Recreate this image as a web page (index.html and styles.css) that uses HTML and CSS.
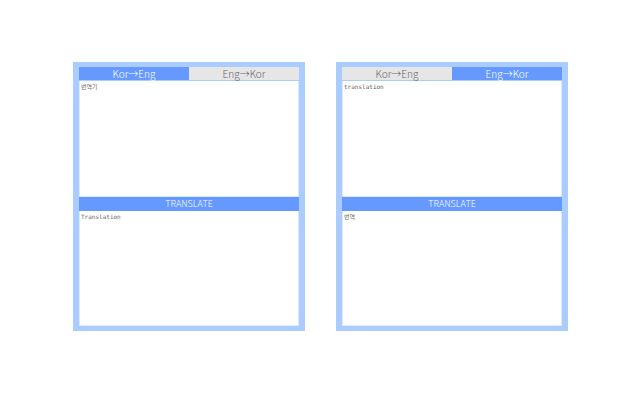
FILE: index.html
```html
<!DOCTYPE html>
<html lang="ko">
<head>
  <meta charset="UTF-8">
  <title>번역기</title>
  <link rel="stylesheet" href="styles.css">
</head>
<body>
  <div class="wrap">
    <div class="panel">
      <div class="tabs">
        <div class="tab active">Kor→Eng</div>
        <div class="tab">Eng→Kor</div>
      </div>
      <textarea class="box" placeholder="번역기"></textarea>
      <button class="go">TRANSLATE</button>
      <textarea class="box last" placeholder="Translation"></textarea>
    </div>

    <div class="panel">
      <div class="tabs">
        <div class="tab">Kor→Eng</div>
        <div class="tab active">Eng→Kor</div>
      </div>
      <textarea class="box" placeholder="translation"></textarea>
      <button class="go">TRANSLATE</button>
      <textarea class="box last" placeholder="번역"></textarea>
    </div>
  </div>
</body>
</html>
```

FILE: styles.css
```css
body {
  margin: 0;
  background: #ffffff;
  font-family: "Noto Sans CJK KR", "DejaVu Sans", sans-serif;
}

.wrap {
  display: flex;
  justify-content: center;
  gap: 31px;
  padding-top: 62px;
  padding-left: 1px;
}

.panel {
  width: 220px;
  border: 6px solid #aaccff;
  border-top-width: 5px;
  border-bottom-width: 5px;
  background: #aaccff;
  display: flex;
  flex-direction: column;
}

.tabs {
  display: flex;
  margin-bottom: 1px;
}

.tab {
  flex: 1;
  height: 13px;
  line-height: 13px;
  font-size: 10px;
  font-weight: 300;
  text-align: center;
  background: #e6e6e6;
  color: #666666;
}

.tab.active {
  background: #6699ff;
  color: #ffffff;
}

.box {
  display: block;
  box-sizing: border-box;
  width: 220px;
  height: 116px;
  margin: 0;
  padding: 1px 1px 0;
  border: 1px solid #dde8ff;
  border-top: none;
  background: #ffffff;
  resize: none;
  font-family: "DejaVu Sans Mono", "Noto Sans CJK KR", monospace;
  font-size: 6px;
  line-height: 9px;
}

.box.last {
  height: 115px;
}

.box::placeholder {
  color: #666666;
}

.go {
  display: block;
  height: 14px;
  margin: 0;
  padding: 0;
  border: none;
  background: #6699ff;
  color: #ffffff;
  font-family: "Noto Sans CJK KR", "DejaVu Sans", sans-serif;
  font-size: 9px;
  font-weight: 300;
  line-height: 14px;
}
```
